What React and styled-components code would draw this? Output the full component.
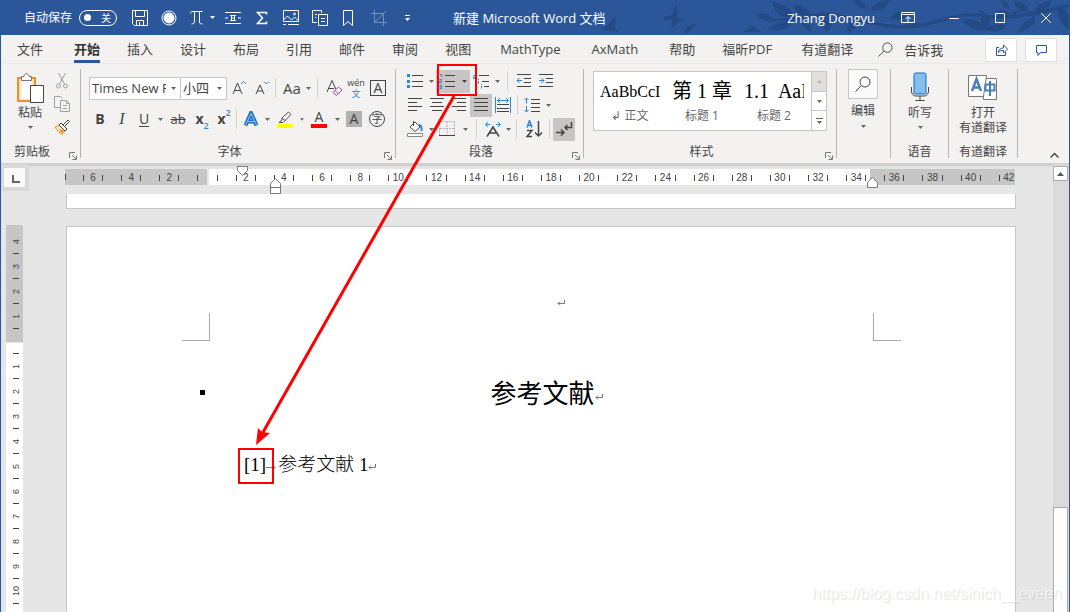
import React, { useState } from 'react';
import styled, { createGlobalStyle } from 'styled-components';

const GlobalStyle = createGlobalStyle`
  * { box-sizing: border-box; }
  body {
    margin: 0;
    font-family: "Open Sans", "Noto Sans CJK SC", sans-serif;
    font-size: 12px;
    color: #444;
  }
  button, input, select {
    font: inherit;
    color: inherit;
  }
`;

const Window = styled.div`
  position: relative;
  display: flex;
  flex-direction: column;
  height: 100vh;
  overflow: hidden;
  border: 1px solid #2b579a;
  border-width: 0 1px;
  background: #e6e6e6;
`;

/* ---------- title bar ---------- */
const TitleBar = styled.header`
  position: relative;
  display: flex;
  align-items: center;
  flex: none;
  height: 35px;
  padding-left: 23px;
  background: #2b579a;
  color: #fff;
`;

const TitleArt = styled.svg`
  position: absolute;
  top: 0;
  right: -1px;
`;

const AutoSave = styled.label`
  display: flex;
  align-items: center;
  gap: 7px;
  margin-right: 11px;
  line-height: 16px;
`;

const Toggle = styled.span`
  position: relative;
  display: flex;
  align-items: center;
  justify-content: space-between;
  width: 38px;
  height: 16px;
  padding: 0 5px 0 4px;
  border: 1px solid #fff;
  border-radius: 8px;
  font-size: 10px;

  &::before {
    content: '';
    width: 7px;
    height: 7px;
    border-radius: 50%;
    background: #fff;
  }

  input {
    position: absolute;
    inset: 0;
    margin: 0;
    opacity: 0;
  }
`;

const QuickTools = styled.div`
  display: flex;
  align-items: center;
`;

const QuickButton = styled.button`
  display: flex;
  align-items: center;
  justify-content: center;
  width: ${(p) => p.$w || 29}px;
  height: 24px;
  padding: 0;
  border: 0;
  background: none;
  opacity: ${(p) => (p.disabled ? 0.35 : 1)};
`;

const DocTitle = styled.h1`
  position: relative;
  flex: 1;
  margin: 0 0 0 32px;
  font-size: 13px;
  line-height: 16px;
  font-weight: 400;
`;

const UserName = styled.span`
  position: relative;
  margin-right: 10px;
  font-size: 13px;
  line-height: 16px;
`;

const WindowButtons = styled.div`
  position: relative;
  display: flex;
`;

/* ---------- tabs ---------- */
const TabBar = styled.nav`
  display: flex;
  align-items: center;
  flex: none;
  height: 29px;
  padding: 0 12px 0 16px;
  background: #f3f2f1;
`;

const TabLink = styled.a`
  margin-right: ${(p) => p.$gap || 27}px;
  padding-top: 2px;
  border-bottom: 3px solid ${(p) => (p.$active ? '#2b579a' : 'transparent')};
  color: ${(p) => (p.$active ? '#333' : '#444')};
  font-size: 13px;
  line-height: 22px;
  font-weight: ${(p) => (p.$active ? 700 : 400)};
  text-decoration: none;
  white-space: nowrap;
`;

const TellMe = styled.button`
  display: flex;
  align-items: center;
  gap: 11px;
  margin-right: auto;
  padding: 0;
  border: 0;
  background: none;
  font-size: 13px;
  line-height: 22px;
`;

const CornerButton = styled.button`
  display: flex;
  align-items: center;
  justify-content: center;
  width: 32px;
  height: 24px;
  margin-left: 8px;
  padding: 0;
  border: 1px solid #e1dfdd;
  border-radius: 2px;
  background: #fff;
`;

/* ---------- ribbon ---------- */
const Ribbon = styled.section`
  display: flex;
  flex: none;
  height: 100px;
  padding: 5px 0;
  border-bottom: 1px solid #d2d0ce;
  background: #f3f2f1;
  box-shadow: 0 1px 3px rgba(0, 0, 0, 0.2);
`;

const GroupBox = styled.div`
  position: relative;
  display: flex;
  flex-direction: column;
  flex: none;
  width: ${(p) => p.$w}px;
  border-right: 1px solid #b8b6b4;
`;

const GroupBody = styled.div`
  display: flex;
  flex-direction: ${(p) => (p.$column ? 'column' : 'row')};
  flex: 1;
  min-height: 0;
  padding: ${(p) => p.$pad || '0'};
`;

const GroupLabel = styled.div`
  padding-right: ${(p) => (p.$launcher ? 17 : 0)}px;
  line-height: 12px;
  text-align: center;
`;

const Launcher = styled.button`
  position: absolute;
  right: 3px;
  bottom: -2px;
  display: flex;
  padding: 0;
  border: 0;
  background: none;
`;

const Row = styled.div`
  display: flex;
  align-items: center;
  flex: none;
  height: ${(p) => p.$h || 24}px;
`;

const Tool = styled.button`
  display: flex;
  align-items: center;
  justify-content: center;
  flex: none;
  width: ${(p) => p.$w || 22}px;
  height: ${(p) => p.$h || 23}px;
  padding: 0;
  border: 0;
  background: ${(p) => (p.$on ? '#c8c6c4' : 'none')};
  font-size: ${(p) => p.$size || 14}px;
  line-height: 20px;

  sub, sup {
    color: #2b88d8;
    font-size: 9px;
    line-height: 10px;
    font-weight: 600;
  }
  sub { align-self: flex-end; }
  sup { align-self: flex-start; }
`;

const Bold = styled.b`
  font-size: 14px;
`;

const Italic = styled.i`
  font-family: "Liberation Serif", serif;
  font-size: 16px;
`;

const Underlined = styled.span`
  border-bottom: 1px solid #444;
  line-height: 15px;
`;

const Struck = styled.s`
  font-size: 13px;
`;

const ColorBar = styled.span`
  display: flex;
  flex-direction: column;
  align-items: center;
  width: 16px;
  border-bottom: 4px solid ${(p) => p.$color};
  line-height: 14px;
`;

const Shaded = styled.span`
  width: 16px;
  background: #b1b1b1;
  line-height: 16px;
`;

const Framed = styled.span`
  width: 16px;
  border: 1px solid #444;
  line-height: 14px;
`;

const Circled = styled.span`
  width: 16px;
  border: 1px solid #444;
  border-radius: 50%;
  font-size: 11px;
  line-height: 14px;
`;

const Phonetic = styled.span`
  display: flex;
  flex-direction: column;
  align-items: center;
  font-size: 9px;
  line-height: 11px;

  em {
    color: #2b88d8;
    font-style: normal;
  }
`;

const Divider = styled.span`
  flex: none;
  width: 1px;
  height: 20px;
  margin: 0 ${(p) => p.$m || 0}px;
  background: #d2d0ce;
`;

const Combo = styled.label`
  display: flex;
  align-items: center;
  width: ${(p) => p.$w}px;
  height: 23px;
  margin-right: -1px;
  padding: 0 4px 0 2px;
  border: 1px solid #c8c6c4;
  background: #fff;
  font-size: 13px;

  select {
    flex: 1;
    min-width: 0;
    margin-right: 5px;
    padding: 0;
    border: 0;
    appearance: none;
    background: none;
    text-overflow: clip;
    overflow: hidden;
  }
`;

const BigButton = styled.button`
  display: flex;
  flex-direction: column;
  align-items: center;
  gap: ${(p) => p.$gap || 0}px;
  padding: ${(p) => p.$top || 0}px 0 0;
  border: 0;
  background: none;
  line-height: 15px;

  > svg:last-child {
    margin-top: 3px;
  }
`;

const SearchTile = styled.span`
  display: flex;
  align-items: center;
  justify-content: center;
  width: 30px;
  height: 30px;
  border: 1px solid #c8c6c4;
  background: #fafafa;
`;

const SmallStack = styled.div`
  display: flex;
  flex-direction: column;
`;

const Gallery = styled.div`
  display: flex;
  height: 60px;
  width: 234px;
  border: 1px solid #c8c6c4;
  background: #fff;
`;

const StyleItem = styled.button`
  display: flex;
  flex-direction: column;
  align-items: center;
  width: 72px;
  padding: 4px 6px 0;
  border: 0;
  background: none;
  color: #666;
  line-height: 18px;
`;

const Preview = styled.span`
  width: 60px;
  overflow: hidden;
  color: #000;
  font-family: "Liberation Serif", "Noto Sans CJK SC", serif;
  font-size: ${(p) => p.$size}px;
  line-height: 31px;
  text-align: left;
  white-space: pre;
`;

const GallerySpin = styled.div`
  display: flex;
  flex-direction: column;
  width: 15px;
  margin-left: auto;
  border-left: 1px solid #c8c6c4;

  button {
    display: flex;
    align-items: center;
    justify-content: center;
    flex: 1;
    padding: 0;
    border: 0;
    border-top: 1px solid #c8c6c4;
    background: #fff;
  }
  button:first-child {
    border-top: 0;
    background: #e1dfdd;
  }
`;

const Collapse = styled.button`
  display: flex;
  align-self: flex-end;
  margin: 0 10px 0 auto;
  padding: 0;
  border: 0;
  background: none;
`;

/* ---------- work area ---------- */
const Workspace = styled.main`
  display: flex;
  flex: 1;
  min-height: 0;
  overflow: hidden;
`;

const LeftRail = styled.div`
  display: flex;
  flex-direction: column;
  flex: none;
  width: 28px;
`;

const TabSelector = styled.button`
  display: flex;
  align-items: center;
  justify-content: center;
  flex: none;
  height: 27px;
  padding: 3px 0 0 3px;
  border: 4px solid #d9d9d9;
  border-left-width: 3px;
  background: #fafafa;
`;

const VerticalRuler = styled.div`
  flex: 1;
  width: 17px;
  margin: 34px 0 0 5px;
  padding-top: 4px;
  background: linear-gradient(#c6c6c6 117px, #e6e6e6 117px 118px, #fff 118px);
`;

const VerticalCell = styled.div`
  display: flex;
  align-items: center;
  justify-content: center;
  position: relative;
  height: 25px;
  padding-left: 2px;
  font-size: 9px;
  font-family: "Liberation Sans", sans-serif;

  span {
    writing-mode: vertical-rl;
    transform: rotate(180deg);
  }
  &::after {
    content: '';
    position: absolute;
    bottom: 0;
    left: 7px;
    width: 6px;
    height: 1px;
    background: #444;
  }
`;

const Center = styled.div`
  display: flex;
  flex-direction: column;
  flex: 1;
  padding: 5px 37px 0;
`;

const Ruler = styled.div`
  position: relative;
  display: flex;
  flex: none;
  align-items: center;
  height: 16px;
  margin: 0 1px 0 -1px;
  background: linear-gradient(
    to right,
    #c6c6c6 142px,
    #e6e6e6 142px 144px,
    #fff 144px calc(100% - 145px),
    #c6c6c6 calc(100% - 145px)
  );
`;

const RulerScale = styled.div`
  display: flex;
  flex: 1;
  margin: 0 -13px 0 8px;
`;

const Tick = styled.span`
  width: 1px;
  height: 6px;
  background: #444;
`;

const RulerCell = styled.div`
  display: flex;
  align-items: center;
  justify-content: space-between;
  flex: 1 1 0;
  min-width: 0;
  padding: 1px 9px 0;
  font-family: "Liberation Sans", sans-serif;
  font-size: 10px;
  line-height: 15px;

  &:last-child ${Tick}:last-child {
    visibility: hidden;
  }
`;

const Marker = styled.svg`
  position: absolute;
  top: ${(p) => p.$top}px;
  ${(p) => (p.$right !== undefined ? `right: ${p.$right}px;` : `left: ${p.$left}px;`)}
`;

const PreviousPage = styled.div`
  flex: none;
  height: 15px;
  margin: 9px 0 17px;
  border: 1px solid #c6c6c6;
  border-top: 0;
  background: #fff;
`;

const Page = styled.article`
  flex: 1;
  padding-top: 68px;
  border: 1px solid #c6c6c6;
  border-bottom: 0;
  background: #fff;
  color: #000;
`;

const HeaderLine = styled.div`
  display: flex;
  justify-content: center;
  align-items: center;
  height: 18px;
  padding: 0 0 2px 39px;
`;

const CropMarks = styled.div`
  display: flex;
  justify-content: space-between;
  height: 28px;
  padding: 0 114px 0 115px;
`;

const CropMark = styled.span`
  width: 28px;
  border: solid #ababab;
  border-width: ${(p) => (p.$side === 'left' ? '0 1px 1px 0' : '0 0 1px 1px')};
`;

const HeadingLine = styled.div`
  display: flex;
  align-items: center;
  margin-top: 31px;
  padding: 0 127px 0 133px;
`;

const Square = styled.span`
  width: 5px;
  height: 5px;
  background: #000;
`;

const Heading = styled.h2`
  display: flex;
  align-items: center;
  justify-content: center;
  flex: 1;
  margin: 0;
  font-family: "Noto Sans CJK SC", sans-serif;
  font-size: 26px;
  line-height: 40px;
  font-weight: 400;

  svg { margin-top: 10px; }
`;

const Reference = styled.p`
  display: flex;
  align-items: center;
  margin: 36px 0 0;
  padding-left: 177px;
  font-family: "Liberation Serif", "Noto Sans CJK SC", serif;
  font-size: 19px;
  line-height: 34px;
  font-weight: 300;
  white-space: pre;

  svg { margin-top: 4px; }
`;

const ScrollBar = styled.div`
  display: flex;
  flex-direction: column;
  flex: none;
  width: 16px;
  padding: 2px 1px 0 0;
  background: #dbdbdb;
`;

const ScrollUp = styled.button`
  display: flex;
  align-items: center;
  justify-content: center;
  height: 15px;
  padding: 0;
  border: 1px solid #ababab;
  background: #fff;
`;

const Thumb = styled.div`
  flex: 1;
  margin-top: 326px;
  border: 1px solid #ababab;
  border-bottom: 0;
  background: #fff;
`;

const Annotation = styled.svg`
  position: absolute;
  top: 0;
  left: -1px;
  pointer-events: none;
`;

const Watermark = styled.div`
  position: absolute;
  right: 7px;
  bottom: 8px;
  color: rgba(255, 255, 255, 0.7);
  font-family: "Liberation Sans", sans-serif;
  font-size: 16px;
  line-height: 20px;
  text-shadow: 1px 1px 1px rgba(0, 0, 0, 0.12);
`;

/* ---------- drawings ---------- */
const Icon = ({ w = 16, h = 16, color = '#444', children }) => (
  <svg width={w} height={h} viewBox={`0 0 ${w} ${h}`} fill="none" stroke={color} aria-hidden="true">
    {children}
  </svg>
);

const Caret = ({ color = '#666' }) => (
  <Icon w={5} h={3} color="none"><path d="M0 0h5L2.500 3z" fill={color} /></Icon>
);

const DropTool = ({ w = 10, label }) => <Tool $w={w} aria-label={label}><Caret /></Tool>;

const ReturnMark = () => (
  <Icon w={8} h={8} color="#777"><path d="M7.500 1v3.500H1M3 2.500l-2 2 2 2" /></Icon>
);

const Lens = ({ size = 16, color = '#444' }) => (
  <svg width={size} height={size} viewBox="0 0 16 16" fill="none" stroke={color}>
    <circle cx="10" cy="6" r="5" /><path d="M6.500 9.500L.5 15.500" />
  </svg>
);

const lines = (list) => list.map(([x1, y, x2]) => <path key={y} d={`M${x1} ${y}.5H${x2}`} />);

const LauncherIcon = () => (
  <Icon w={9} h={9} color="#777"><path d="M1.500 7V1.500H7M4 4l4 4M8.500 4.500v4h-4" /></Icon>
);

const Leaves = () => (
  <TitleArt width="480" height="35" viewBox="590 0 480 35" fill="#244a86" aria-hidden="true">
    <path d="M602 28c7-1 9-8 14-13-2 6 0 10-1 13l4 4c-6-1-12 0-17-4z" />
    <path d="M664 17c5-2 8 0 9-5l3-8c0 5 4 8 0 14 4 0 8-1 9 3-6-1-7 2-9 4l-5 3 2-9-9 1z" />
    <path d="M685 32c0-5 6-8 12-8-4 3-5 9-12 9zM743 32c3-3 5-2 6-5 1-4 5-2 6 0l7 5z" />
    <path d="M756 15c9-4 15 1 20 6-7 2-15 0-20-6zM765 3l9 5-2-7 10 3c7 3 10 7 12 13-9 1-17-1-20-9zM769 30c4-8 14-9 23-7-5 7-13 9-23 7zM793 5c9 0 15 3 18 11-8 1-17-2-18-11zM800 18c7 2 10 8 12 14-6-2-11-7-12-14zM827 14c7 2 8 10 0 18-6-5-5-12 0-18z" />
    <path d="M770 18c24 3 42-7 62-5 28 4 50 14 81 12 23-3 47-15 66-11 22 5 55-2 90-10l1 3c-35 10-70 15-92 10-19-4-42 9-65 11-31 3-53-8-81-12-20-2-39 8-62 4z" />
    <path d="M848 33c-4-8 4-13 9-18 1 8 1 14-9 18zM866 9c-8-1-10-5-13-9 9 0 12 3 13 9zM870 10c5-9 14-9 20-10-3 8-9 12-20 10zM906 26c4-5 10-5 16-1-5 4-11 4-16 1zM890 18c4-7 14-9 22-4-7 5-14 7-22 4z" />
    <path d="M963 21c8-4 13-1 19 3l-3-15c9 4 13 10 10 17 11-4 14 0 18-1-6 7-13 8-21 5-10 2-17-1-23-9zM1018 33c1-8 8-13 17-17 1 9-6 13-17 17zM1014 1c10 1 14 5 15 11-9-1-14-4-15-11zM1035 12c1-8 8-10 16-12-1 8-7 13-16 12zM1057 8c6-2 10 4 13 10v12c-8-4-13-12-13-22z" />
    <path d="M1012 13l15-8 1 2-15 8zM1001 0c6 1 9 5 9 9-6-1-9-4-9-9zM995 13c5-5 11-3 15 1-5 3-11 2-15-1z" />
  </TitleArt>
);

const WHITE = '#fff';

const QuickAccess = () => (
  <QuickTools>
    <QuickButton $w={24} aria-label="保存">
      <Icon color={WHITE}><path d="M.5.5h15v15h-13l-2-2zM3.500.5v6h9v-6M4.500 15.500v-5h7v5M7.500 12v3" /></Icon>
    </QuickButton>
    <QuickButton $w={34} aria-label="录制">
      <Icon color={WHITE}><circle cx="8" cy="8" r="7" /><circle cx="8" cy="8" r="5" fill={WHITE} /></Icon>
    </QuickButton>
    <QuickButton $w={22} aria-label="公式">
      <Icon w={14} color={WHITE}><path d="M0 4c0-2 1-2.500 3-2.500h10M4.500 2v9c0 2-1 3-3 3M9.500 2v10c0 1.500 1 2 3 2" /></Icon>
    </QuickButton>
    <QuickButton $w={8} aria-label="更多公式"><Caret color={WHITE} /></QuickButton>
    <QuickButton $w={34} aria-label="公式编号">
      <Icon color={WHITE}>
        <path d="M0 2.500h16M0 13.500h16M0 8h3M13 8h3" /><path d="M5 5.500h6M5 10.500h6M6 8h4M6.500 5v6M9.500 5v6" />
      </Icon>
    </QuickButton>
    <QuickButton $w={24} aria-label="求和">
      <Icon w={12} color={WHITE}><path d="M10.500 4.500V2.500h-9L6.500 8l-5 5.500h9v-2" strokeWidth="1.500" /></Icon>
    </QuickButton>
    <QuickButton $w={34} aria-label="图片">
      <Icon color={WHITE}>
        <path d="M.5.5h15v11H.5zM.5 10l4-4 4 4 3-3 4 4M0 14.500h3M5 14.500h11" /><circle cx="11.500" cy="4" r="1" />
      </Icon>
    </QuickButton>
    <QuickButton $w={24} aria-label="复制格式">
      <Icon w={17} color={WHITE}><path d="M5 12.500H.5V.5h9V3M3 4.500h2M3 7.500h1M6.500 4.500h9v11h-9zM9 8.500h4M9 11.500h4" /></Icon>
    </QuickButton>
    <QuickButton $w={32} aria-label="书签">
      <Icon w={10} color={WHITE}><path d="M.5.5h9v15L5 11.500.5 15.500z" /></Icon>
    </QuickButton>
    <QuickButton disabled aria-label="裁剪">
      <Icon color={WHITE}><path d="M3.500 0v12.500H16M0 3.500h12.500V16M3.500 12.500L15 1" /></Icon>
    </QuickButton>
    <QuickButton $w={28} aria-label="自定义快速访问工具栏">
      <Icon w={5} h={6} color="none"><path d="M0 0h5v1H0zM0 3h5L2.500 6z" fill={WHITE} /></Icon>
    </QuickButton>
  </QuickTools>
);

const TABS = [
  { name: '文件', gap: 31 },
  { name: '开始' },
  { name: '插入' },
  { name: '设计' },
  { name: '布局' },
  { name: '引用' },
  { name: '邮件' },
  { name: '审阅' },
  { name: '视图', gap: 29 },
  { name: 'MathType', gap: 31 },
  { name: 'AxMath', gap: 31 },
  { name: '帮助' },
  { name: '福昕PDF', gap: 29 },
  { name: '有道翻译', gap: 25 },
];

const Group = ({ w, label, launcher, column, pad, children }) => (
  <GroupBox $w={w}>
    <GroupBody $column={column} $pad={pad}>{children}</GroupBody>
    {label && <GroupLabel $launcher={launcher}>{label}</GroupLabel>}
    {launcher && <Launcher aria-label={`${label}设置`}><LauncherIcon /></Launcher>}
  </GroupBox>
);

const ClipboardGroup = () => (
  <Group w={80} label="剪贴板" launcher pad="0 0 0 14px">
    <BigButton $top={4}>
      <Icon w={30} h={32}>
        <path d="M3 5h17v23H3z" fill="#fbe3b5" stroke="#e8912d" strokeWidth="2" />
        <path d="M6 8h11v18H6z" fill="#fff" stroke="none" />
        <path d="M6.500 7.500v-4H9c1-4 4-4 5 0h2.500v4z" fill="#fff" stroke="#777" />
        <path d="M15.500 12.500h13v17h-13z" fill="#fff" />
      </Icon>
      粘贴
      <Tool as="span" $w={10} $h={15}><Caret /></Tool>
    </BigButton>
    <SmallStack>
      <Tool $w={34} aria-label="剪切">
        <Icon color="#a19f9d"><path d="M4.500 0l6 11M11.500 0l-6 11" /><circle cx="4.500" cy="13" r="2" /><circle cx="11.500" cy="13" r="2" /></Icon>
      </Tool>
      <Tool $w={34} aria-label="复制">
        <Icon color="#a19f9d"><path d="M6 11.500H.5V.5h6l2 2M6.500 4.500h6l3 3v8h-9zM12.500 4.500v3h3M9 9.500h4M9 12.500h4" /></Icon>
      </Tool>
      <Tool $w={34} aria-label="格式刷">
        <Icon>
          <path d="M1 8l4-2 6 6-3 3.500C5 14 3 11 1 8z" fill="#fbe3b5" stroke="#e8912d" />
          <path d="M5 10.500l5 1-2 3z" fill="#ed7d31" stroke="none" />
          <path d="M5 6l2-2 6 6-2 2zM9 6l5-5 1.500 1.500-5 5z" fill="#fff" />
        </Icon>
      </Tool>
    </SmallStack>
  </Group>
);

const FontGroup = () => (
  <Group w={315} label="字体" launcher column pad="7px 0 0 8px">
    <Row>
      <Combo $w={92}>
        <select aria-label="字体名称"><option>Times New Roman</option></select>
        <Caret />
      </Combo>
      <Combo $w={47}>
        <select aria-label="字号"><option>小四</option></select>
        <Caret />
      </Combo>
      <Tool $w={26} aria-label="增大字号">
        <Icon w={14}><path d="M1 14L5.500 3 10 14M2.500 10.500h6" /><path d="M9 4l2.500-2.500L14 4" stroke="#2b88d8" /></Icon>
      </Tool>
      <Tool $w={20} aria-label="减小字号">
        <Icon w={14}><path d="M1 14L5 5l4 9M2.500 11h5" /><path d="M9 1.500L11.500 4 14 1.500" stroke="#2b88d8" /></Icon>
      </Tool>
      <Divider $m={3} />
      <Tool $w={26} $size={15} aria-label="更改大小写">Aa</Tool>
      <DropTool w={6} label="大小写选项" />
      <Divider $m={6} />
      <Tool $w={20} aria-label="清除格式">
        <Icon w={17}>
          <path d="M1 12L6 .5l4 9M3 8.500h5" /><path d="M7 12.500L12.500 7 16 10l-5.500 5.500zM9 10.500l3.500 3.500" fill="#fff" stroke="#a33fb5" />
        </Icon>
      </Tool>
      <Tool $w={24} aria-label="拼音指南"><Phonetic>wén<em>文</em></Phonetic></Tool>
      <Tool $w={20} aria-label="字符边框"><Framed>A</Framed></Tool>
    </Row>
    <Row $h={38}>
      <Tool aria-label="加粗"><Bold>B</Bold></Tool>
      <Tool aria-label="倾斜"><Italic>I</Italic></Tool>
      <Tool aria-label="下划线"><Underlined>U</Underlined></Tool>
      <DropTool label="下划线样式" />
      <Tool $w={26} aria-label="删除线"><Struck>ab</Struck></Tool>
      <Tool aria-label="下标"><b>x</b><sub>2</sub></Tool>
      <Tool aria-label="上标"><b>x</b><sup>2</sup></Tool>
      <Divider $m={1} />
      <Tool $w={26} aria-label="文本效果">
        <Icon>
          <path d="M2.500 14.500L8 2l5.500 12.500M4.500 10.500h7" stroke="#1e6fc0" strokeWidth="4" />
          <path d="M2.500 14L8 2.500 13.500 14M4.500 10.500h7" stroke="#9cc8f0" />
        </Icon>
      </Tool>
      <DropTool w={6} label="文本效果选项" />
      <Tool $w={30} aria-label="突出显示">
        <ColorBar $color="#ff0">
          <Icon h={13}><path d="M2 11.500h4l8-8-2.500-2.500-6.500 6v2zM5.500 7.500L8 9.500" fill="#fff" /></Icon>
        </ColorBar>
      </Tool>
      <DropTool w={4} label="突出显示颜色" />
      <Tool $w={30} aria-label="字体颜色"><ColorBar $color="#f00">A</ColorBar></Tool>
      <DropTool w={6} label="字体颜色选项" />
      <Tool $w={28} aria-label="字符底纹"><Shaded>A</Shaded></Tool>
      <Tool $w={18} aria-label="带圈字符"><Circled>字</Circled></Tool>
    </Row>
  </Group>
);

const BLUE = '#2b88d8';

const ParagraphGroup = () => (
  <Group w={188} label="段落" launcher column pad="0 0 0 8px">
    <Row>
      <Tool aria-label="项目符号">
        <Icon>
          {lines([[5, 2, 16], [5, 8, 16], [5, 13, 16]])}
          <path d="M0 1h3v3H0zM0 7h3v3H0zM0 12h3v3H0z" fill={BLUE} stroke="none" />
        </Icon>
      </Tool>
      <DropTool label="项目符号库" />
      <Tool $on aria-label="编号">
        <Icon>
          {lines([[6, 2, 16], [6, 8, 16], [6, 13, 16]])}
          <path d="M1 1.500h1.500V4M.5 6.500h2v2h-2v1.500h2M.5 12.500h2v3h-2M.5 14h2" stroke={BLUE} />
        </Icon>
      </Tool>
      <Tool $w={12} $on aria-label="编号库"><Caret color="#444" /></Tool>
      <Tool aria-label="多级列表">
        <Icon>
          {lines([[6, 2, 16], [9, 8, 16], [11, 13, 16]])}
          <path d="M.5 2.500h2v3h-2v-1.500h2M5.500 8v2.500M5.500 6v1M8.500 13v2.500M8.500 11v1" stroke={BLUE} />
        </Icon>
      </Tool>
      <DropTool label="多级列表库" />
      <Divider $m={5} />
      <Tool aria-label="减少缩进">
        <Icon>{lines([[1, 1, 15], [8, 5, 15], [8, 9, 15], [1, 13, 15]])}<path d="M6 7.500H1M3.500 5L1 7.500 3.500 10" stroke={BLUE} /></Icon>
      </Tool>
      <Tool aria-label="增加缩进">
        <Icon>{lines([[1, 1, 15], [8, 5, 15], [8, 9, 15], [1, 13, 15]])}<path d="M1 7.500h5M3.500 5L6 7.500 3.500 10" stroke={BLUE} /></Icon>
      </Tool>
    </Row>
    <Row>
      <Tool aria-label="左对齐"><Icon>{lines([[1, 1, 15], [1, 5, 10], [1, 9, 15], [1, 13, 10]])}</Icon></Tool>
      <Tool aria-label="居中"><Icon>{lines([[1, 1, 15], [3, 5, 13], [1, 9, 15], [3, 13, 13]])}</Icon></Tool>
      <Tool aria-label="右对齐"><Icon>{lines([[1, 1, 15], [6, 5, 15], [1, 9, 15], [6, 13, 15]])}</Icon></Tool>
      <Tool $on aria-label="两端对齐"><Icon>{lines([[1, 1, 15], [1, 5, 15], [1, 9, 15], [1, 13, 15]])}</Icon></Tool>
      <Tool aria-label="分散对齐">
        <Icon>
          {lines([[2, 7, 14], [2, 11, 14], [2, 14, 14]])}
          <path d="M.5 0v16M15.500 0v16M2 3.500h12M5 1L2.500 3.500 5 6M11 1l2.500 2.500L11 6" stroke={BLUE} />
        </Icon>
      </Tool>
      <Divider $m={3} />
      <Tool aria-label="行距">
        <Icon>
          {lines([[7, 2, 16], [7, 6, 16], [7, 10, 16], [7, 14, 16]])}
          <path d="M2.500 1v5.500M.5 3l2-2 2 2M2.500 9v6M.5 13l2 2 2-2" stroke={BLUE} />
        </Icon>
      </Tool>
      <DropTool label="行距选项" />
    </Row>
    <Row>
      <Tool aria-label="底纹">
        <Icon>
          <path d="M.5 12.500h15v3H.500z" fill="#fff" stroke="#888" /><path d="M3 6l5-5 5 5-5 4.500zM6.500 0v5" fill="#fff" />
          <path d="M12 4c2 0 3 2 2.500 6" stroke={BLUE} strokeWidth="2" />
        </Icon>
      </Tool>
      <DropTool label="底纹颜色" />
      <Tool aria-label="边框">
        <Icon><path d="M.5.5h15v14M.5.5v14M8 1v13M1 7.500h14" stroke="#b3b0ad" strokeDasharray="2 1" /><path d="M0 14.500h16" /></Icon>
      </Tool>
      <DropTool w={14} label="边框选项" />
      <Divider $m={4} />
      <Tool $w={24} aria-label="中文版式">
        <Icon w={18}>
          <path d="M3 15.500L9 6l6 9.500M5.500 12h7" strokeWidth="1.500" />
          <path d="M6 3.500H1.500M4 1L1.500 3.500 4 6M12 3.500h4.500M14 1l2.500 2.500L14 6" stroke={BLUE} />
        </Icon>
      </Tool>
      <DropTool w={6} label="中文版式选项" />
      <Divider $m={5} />
      <Tool $w={24} aria-label="排序">
        <Icon w={17} h={18}>
          <path d="M1 7.500L3.500.5 6 7.500M2 5.500h3" stroke={BLUE} strokeWidth="1.500" />
          <path d="M1 10.500h5l-5 6h5M12.500 1v15M9 12.500l3.500 3.500 3.500-3.500" strokeWidth="1.500" />
        </Icon>
      </Tool>
      <Divider $m={3} />
      <Tool $on aria-label="显示编辑标记">
        <Icon w={18} h={18}><path d="M16.500 2v5.500H10M12.500 5L10 7.500l2.500 2.500M1 12.500h8M6 9.500l3 3-3 3" strokeWidth="1.500" /></Icon>
      </Tool>
    </Row>
  </Group>
);

const STYLES = [
  { sample: 'AaBbCcI', size: 16, name: '↲ 正文' },
  { sample: '第 1 章', size: 20, name: '标题 1' },
  { sample: '1.1  AaB', size: 20, name: '标题 2' },
];

const StylesGroup = () => (
  <Group w={253} label="样式" launcher pad="2px 0 0 9px">
    <Gallery>
      {STYLES.map((item) => (
        <StyleItem key={item.name}>
          <Preview $size={item.size}>{item.sample}</Preview>
          {item.name}
        </StyleItem>
      ))}
      <GallerySpin>
        <button aria-label="上一行"><Icon w={5} h={3} color="none"><path d="M0 3h5L2.500 0z" fill="#b3b0ad" /></Icon></button>
        <button aria-label="下一行"><Caret /></button>
        <button aria-label="其他"><Icon w={7} h={6} color="none"><path d="M0 0h7v1H0zM1 3h5L3.500 6z" fill="#666" /></Icon></button>
      </GallerySpin>
    </Gallery>
  </Group>
);

const DictateIcon = () => (
  <Icon w={20} h={30}>
    <path d="M1.500 15v4c0 3 2 5 4.500 5h8c2.500 0 4.500-2 4.500-5v-4M10 24v4M5.500 28.500h9" />
    <rect x="4" y="1" width="12" height="21" rx="1.500" fill="#83beec" stroke="#0f6cbd" />
  </Icon>
);

const TranslateIcon = () => (
  <Icon w={30} h={30}>
    <path d="M15.500 3.500h13v21h-13z" fill="#fff" stroke="#777" />
    <path d="M.5.5h18l-3 21H.5z" fill="#fff" stroke="#777" />
    <path d="M4 16L8.500 4 13 16M5.500 12.500h6" stroke="#4a7ebb" strokeWidth="2.500" />
    <path d="M17.500 9.500h9v6h-9zM22 6v15" stroke="#4a7ebb" strokeWidth="2" />
  </Icon>
);

const HORIZONTAL = [6, 4, 2, '', 2, 4, 6, 8, 10, 12, 14, 16, 18, 20, 22, 24, 26, 28, 30, 32, 34, 36, 38, 40, 42];
const VERTICAL = [4, 3, 2, 1, '', 1, 2, 3, 4, 5, 6, 7, 8, 9, 10];

const App = () => {
  const [active, setActive] = useState('开始');
  const [autoSave, setAutoSave] = useState(false);

  return (
    <Window>
      <GlobalStyle />
      <TitleBar>
        <Leaves />
        <AutoSave>
          自动保存
          <Toggle>
            <input type="checkbox" checked={autoSave} onChange={() => setAutoSave(!autoSave)} />
            {autoSave ? '开' : '关'}
          </Toggle>
        </AutoSave>
        <QuickAccess />
        <DocTitle>新建 Microsoft Word 文档</DocTitle>
        <UserName>Zhang Dongyu</UserName>
        <WindowButtons>
          <QuickButton $w={46} aria-label="功能区显示选项">
            <Icon w={14} h={12} color={WHITE}><path d="M.5.5h13v10H.5zM.5 2.500h13M7 10V5M4.500 7L7 4.500 9.500 7" /></Icon>
          </QuickButton>
          <QuickButton $w={46} aria-label="最小化"><Icon w={10} h={10} color={WHITE}><path d="M0 5.500h10" /></Icon></QuickButton>
          <QuickButton $w={46} aria-label="最大化"><Icon w={10} h={10} color={WHITE}><path d="M.5.5h9v9h-9z" /></Icon></QuickButton>
          <QuickButton $w={46} aria-label="关闭"><Icon w={10} h={10} color={WHITE}><path d="M0 0l10 10M10 0L0 10" /></Icon></QuickButton>
        </WindowButtons>
      </TitleBar>

      <TabBar>
        {TABS.map((tab) => (
          <TabLink
            key={tab.name}
            href="#"
            $gap={tab.gap}
            $active={tab.name === active}
            onClick={() => setActive(tab.name)}
          >
            {tab.name}
          </TabLink>
        ))}
        <TellMe><Lens size={15} />告诉我</TellMe>
        <CornerButton aria-label="共享">
          <Icon w={13} h={13} color="#2b579a"><path d="M4 4.500H1.500v8h9V9M3.500 9.500c0-3 2-4.500 5-4.500V2l4 4-4 4V7.500c-2 0-4 0-5 2z" /></Icon>
        </CornerButton>
        <CornerButton aria-label="批注">
          <Icon w={13} h={12} color="#2b579a"><path d="M1.500 1.500h10v7h-6l-2.500 3v-3H1.500z" /></Icon>
        </CornerButton>
      </TabBar>

      <Ribbon>
        <ClipboardGroup />
        <FontGroup />
        <ParagraphGroup />
        <StylesGroup />
        <Group w={54} pad="0 0 0 11px">
          <BigButton $gap={4}>
            <SearchTile><Lens /></SearchTile>
            编辑
            <Caret />
          </BigButton>
        </Group>
        <Group w={58} label="语音" pad="3px 0 0 17px">
          <BigButton $gap={3}><DictateIcon />听写<Caret /></BigButton>
        </Group>
        <Group w={69} label="有道翻译" pad="6px 0 0 10px">
          <BigButton><TranslateIcon /><span>打开</span><span>有道翻译</span></BigButton>
        </Group>
        <Collapse aria-label="折叠功能区"><Icon w={9} h={6}><path d="M.5 5.500l4-4 4 4" strokeWidth="1.500" /></Icon></Collapse>
      </Ribbon>

      <Workspace>
        <LeftRail>
          <TabSelector aria-label="制表符"><Icon w={8} h={8} color="#666"><path d="M1 0v7h7" strokeWidth="2" /></Icon></TabSelector>
          <VerticalRuler>
            {VERTICAL.map((n, index) => (
              <VerticalCell key={index}><span>{n}</span></VerticalCell>
            ))}
          </VerticalRuler>
        </LeftRail>
        <Center>
          <Ruler>
            <Tick />
            <RulerScale>
              {HORIZONTAL.map((n, index) => (
                <RulerCell key={index}><Tick />{n}<Tick /></RulerCell>
              ))}
            </RulerScale>
            <Marker $top={-3} $left={172} width="11" height="10" fill="#fff" stroke="#777">
              <path d="M.5.5h10v4l-5 5-5-5z" />
            </Marker>
            <Marker $top={9} $left={205} width="11" height="16" fill="#fff" stroke="#777">
              <path d="M.5 15.500v-10l5-5 5 5v10zM.5 9.500h10" />
            </Marker>
            <Marker $top={8} $right={137} width="11" height="11" fill="#fff" stroke="#777">
              <path d="M.5 10.500v-5l5-5 5 5v5z" />
            </Marker>
          </Ruler>
          <PreviousPage />
          <Page>
            <HeaderLine><ReturnMark /></HeaderLine>
            <CropMarks><CropMark $side="left" /><CropMark $side="right" /></CropMarks>
            <HeadingLine>
              <Square />
              <Heading>参考文献<ReturnMark /></Heading>
            </HeadingLine>
            <Reference>
              [1]
              <Icon w={12} h={8} color="#777"><path d="M0 4.500h9M6.500 2L9 4.500 6.500 7" /></Icon>
              参考文献 1<ReturnMark />
            </Reference>
          </Page>
        </Center>
        <ScrollBar>
          <ScrollUp aria-label="向上滚动"><Icon w={7} h={4} color="none"><path d="M0 4h7L3.500 0z" fill="#555" /></Icon></ScrollUp>
          <Thumb />
        </ScrollBar>
      </Workspace>

      <Annotation width="500" height="500" viewBox="0 0 500 500" fill="none" stroke="#f00" aria-hidden="true">
        <rect x="438" y="65" width="38" height="30" strokeWidth="2" />
        <path d="M454 96L262 434" strokeWidth="3" />
        <path d="M256 445l2-17 4 4 8 1z" fill="#f00" stroke="none" />
        <rect x="239" y="449" width="34" height="34" strokeWidth="2" />
      </Annotation>
      <Watermark>https://blog.csdn.net/sinich__eveen</Watermark>
    </Window>
  );
};

export default App;
